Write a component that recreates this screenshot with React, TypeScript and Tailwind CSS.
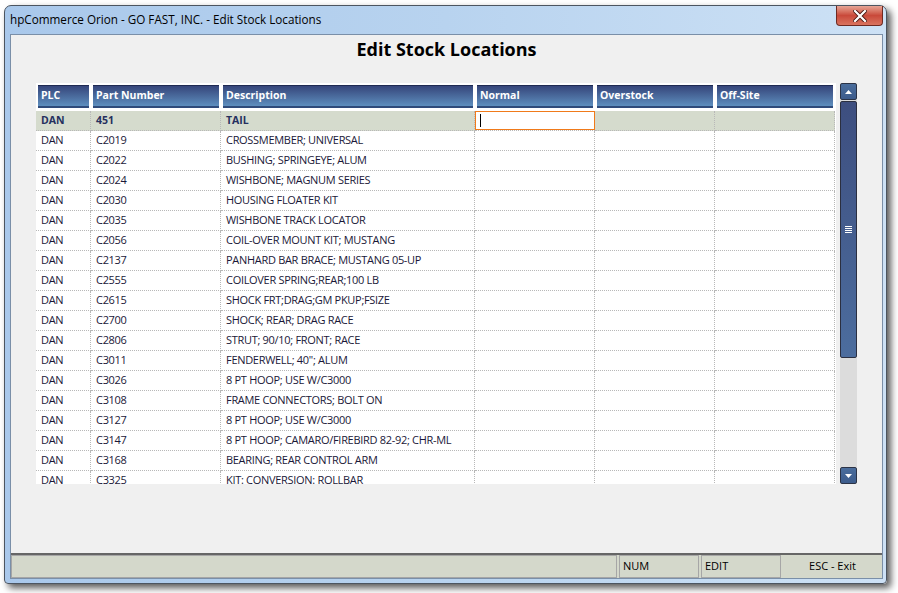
import React from 'react'

const rows: [string, string, string][] = [
  ['DAN', 'C2019', 'CROSSMEMBER; UNIVERSAL'],
  ['DAN', 'C2022', 'BUSHING; SPRINGEYE; ALUM'],
  ['DAN', 'C2024', 'WISHBONE; MAGNUM SERIES'],
  ['DAN', 'C2030', 'HOUSING FLOATER KIT'],
  ['DAN', 'C2035', 'WISHBONE TRACK LOCATOR'],
  ['DAN', 'C2056', 'COIL-OVER MOUNT KIT; MUSTANG'],
  ['DAN', 'C2137', 'PANHARD BAR BRACE; MUSTANG 05-UP'],
  ['DAN', 'C2555', 'COILOVER SPRING;REAR;100 LB'],
  ['DAN', 'C2615', 'SHOCK FRT;DRAG;GM PKUP;FSIZE'],
  ['DAN', 'C2700', 'SHOCK; REAR; DRAG RACE'],
  ['DAN', 'C2806', 'STRUT; 90/10; FRONT; RACE'],
  ['DAN', 'C3011', 'FENDERWELL; 40"; ALUM'],
  ['DAN', 'C3026', '8 PT HOOP; USE W/C3000'],
  ['DAN', 'C3108', 'FRAME CONNECTORS; BOLT ON'],
  ['DAN', 'C3127', '8 PT HOOP; USE W/C3000'],
  ['DAN', 'C3147', '8 PT HOOP; CAMARO/FIREBIRD 82-92; CHR-ML'],
  ['DAN', 'C3168', 'BEARING; REAR CONTROL ARM'],
  ['DAN', 'C3325', 'KIT: CONVERSION: ROLLBAR'],
]

const cols = ['w-[55px]', 'w-[130px]', 'w-[254px]', 'w-[120px]', 'w-[120px]', 'w-[120px]']
const heads = ['PLC', 'Part Number', 'Description', 'Normal', 'Overstock', 'Off-Site']

function Header() {
  return (
    <div className="flex h-[28px] pt-[2px]">
      {heads.map((h, i) => (
        <div key={h} className={`${cols[i]} shrink-0 px-[2px]`}>
          <div className="flex h-[23px] items-center border-t border-b-2 border-t-[#1f2a52] border-b-[#2f4b7a] bg-gradient-to-b from-[#36467b] to-[#5e8fbe] pl-[3px] text-[10.5px] font-bold text-white">
            {h}
          </div>
        </div>
      ))}
    </div>
  )
}

function SelectedRow() {
  const vals = ['DAN', '451', 'TAIL', '', '', '']
  return (
    <div className="flex h-[20px]">
      {vals.map((v, i) => {
        if (i === 3) {
          return (
            <div key={i} className={`${cols[i]} shrink-0 border-b border-dotted border-[#b8b8b8]`}>
              <div className="flex h-[19px] items-center border border-[#f07a1a] bg-white pl-[4px]">
                <div className="h-[13px] w-px bg-black" />
              </div>
            </div>
          )
        }
        return (
          <div
            key={i}
            className={`${cols[i]} shrink-0 flex items-center border-b border-r border-dotted border-[#b8b8b8] bg-[#d5dbcd] pl-[5px] text-[10.5px] font-bold text-[#25305e]`}
          >
            {v}
          </div>
        )
      })}
    </div>
  )
}

function Row({ r }: { r: [string, string, string] }) {
  const vals = [r[0], r[1], r[2], '', '', '']
  return (
    <div className="flex h-[20px] shrink-0">
      {vals.map((v, i) => (
        <div
          key={i}
          className={`${cols[i]} shrink-0 flex items-center overflow-hidden whitespace-nowrap border-b border-r border-dotted border-[#b8b8b8] pl-[5px] text-[11px] tracking-[-0.3px] text-[#1a1838]`}
        >
          {v}
        </div>
      ))}
    </div>
  )
}

function ScrollBtn({ up }: { up: boolean }) {
  return (
    <div className="flex h-[17px] items-center justify-center rounded-[2px] border border-[#2b3346] bg-gradient-to-b from-[#4a6d9c] to-[#3d5c8c]">
      <svg width="7" height="4" viewBox="0 0 7 4">
        {up ? <path d="M0 4 L3.5 0 L7 4 Z" fill="#fff" /> : <path d="M0 0 L7 0 L3.5 4 Z" fill="#fff" />}
      </svg>
    </div>
  )
}

function Scrollbar() {
  return (
    <div className="ml-[4px] flex h-[401px] w-[17px] flex-col bg-[#dcdcdc]">
      <ScrollBtn up />
      <div className="mt-px flex h-[257px] items-center justify-center rounded-[2px] border border-[#2b2f40] bg-gradient-to-b from-[#3d4e7f] to-[#4c6d9e]">
        <div className="flex flex-col gap-[1px]">
          <div className="h-px w-[7px] bg-white" />
          <div className="h-px w-[7px] bg-white" />
          <div className="h-px w-[7px] bg-white" />
          <div className="h-px w-[7px] bg-white" />
        </div>
      </div>
      <div className="flex-1" />
      <ScrollBtn up={false} />
    </div>
  )
}

function CloseBtn() {
  return (
    <div className="flex h-[20px] w-[47px] items-center justify-center rounded-b-[4px] border border-t-0 border-[#6e2a22] bg-gradient-to-b from-[#e6a596] via-[#c9493a] to-[#d9735f]">
      <svg width="14" height="12" viewBox="0 0 14 12">
        <path d="M2 1 L12 11 M12 1 L2 11" stroke="#4a1a14" strokeWidth="4" strokeLinecap="square" />
        <path d="M2 1 L12 11 M12 1 L2 11" stroke="#fff" strokeWidth="2.2" strokeLinecap="square" />
      </svg>
    </div>
  )
}

export default function App() {
  return (
    <div className="h-[593px] w-[898px] overflow-hidden bg-white pl-[4px] pt-[5px]" style={{ fontFamily: '"Open Sans", "Noto Sans", sans-serif' }}>
      <div className="flex h-[579px] w-[883px] flex-col rounded-t-[7px] rounded-b-[4px] border border-[#4c5560] bg-gradient-to-r from-[#a9c8eb] via-[#b8d3ef] to-[#cde1f5] shadow-[4px_4px_7px_rgba(0,0,0,0.65)]">
        <div className="flex h-[28px] shrink-0 items-start justify-between">
          <div className="pl-[5px] pt-[5px] text-[11.7px] leading-[17px] text-black">
            hpCommerce Orion - GO FAST, INC. - Edit Stock Locations
          </div>
          <div className="mr-[3px]">
            <CloseBtn />
          </div>
        </div>
        <div className="ml-[5px] flex h-[545px] w-[873px] flex-col border border-[#7a8fa8] bg-[#f0f0f0]">
          <div className="flex-1">
            <div className="mt-[2px] h-[24px] text-center text-[18px] font-bold leading-[24px] text-black">
              Edit Stock Locations
            </div>
            <div className="ml-[25px] mt-[22px] flex items-start">
              <div className="h-[401px] w-[800px] overflow-hidden bg-white">
                <Header />
                <SelectedRow />
                {rows.map((r) => (
                  <Row key={r[1] + r[2]} r={r} />
                ))}
              </div>
              <Scrollbar />
            </div>
          </div>
          <div className="flex h-[25px] shrink-0 border-t-2 border-[#666] bg-[#d4d8cb] text-[11px] text-black">
            <div className="w-[606px] border border-[#a6a6a6]" />
            <div className="ml-[2px] flex w-[80px] items-center border border-[#a6a6a6] pl-[3px]">NUM</div>
            <div className="ml-[2px] flex w-[80px] items-center border border-[#a6a6a6] pl-[3px]">EDIT</div>
            <div className="flex flex-1 items-center justify-center pl-[2px]">ESC - Exit</div>
          </div>
        </div>
      </div>
    </div>
  )
}
